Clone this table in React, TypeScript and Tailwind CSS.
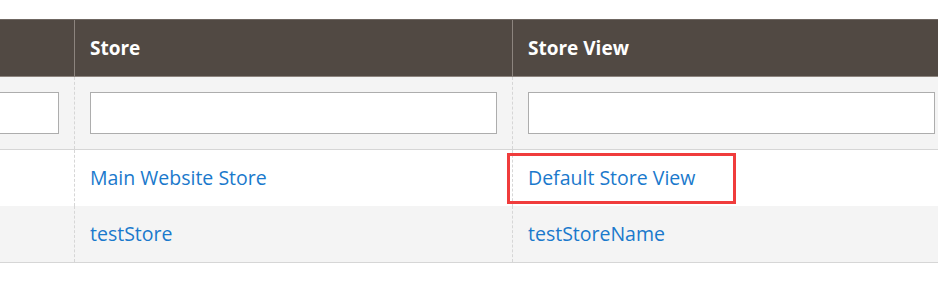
import React from "react";

const font = { fontFamily: '"Open Sans", "Noto Sans", sans-serif' };

export default function App() {
  return (
    <div className="w-[938px] h-[299px] overflow-hidden bg-white pt-[19px]" style={font}>
      <div className="w-[1100px]">
        {/* Header */}
        <div className="flex h-[58px] bg-[#514943] border-t border-t-[#6f6762] border-b border-b-[#8c847e]">
          <div className="w-[74px] shrink-0" />
          <div className="w-[438px] shrink-0 border-l border-l-[#8c847e] pl-[15px] flex items-center text-white font-bold text-[19px]">
            Store
          </div>
          <div className="w-[438px] shrink-0 border-l border-l-[#8c847e] pl-[15px] flex items-center text-white font-bold text-[19px]">
            Store View
          </div>
        </div>
        {/* Filter row */}
        <div className="flex bg-[#f4f4f4] border-b border-b-[#d6d6d6]">
          <div className="w-[74px] shrink-0 overflow-hidden py-[15px] pr-[15px] flex justify-end">
            <div className="w-[120px] shrink-0 h-[42px] bg-white border border-[#adadad]" />
          </div>
          <div className="w-[438px] shrink-0 border-l border-dashed border-l-[#d6d6d6] py-[15px] pl-[15px] pr-[15px]">
            <div className="h-[42px] bg-white border border-[#adadad]" />
          </div>
          <div className="w-[438px] shrink-0 border-l border-dashed border-l-[#d6d6d6] py-[15px] pl-[15px] pr-[15px]">
            <div className="h-[42px] bg-white border border-[#adadad]" />
          </div>
        </div>
        {/* Row 1 */}
        <div className="flex h-[56px] bg-white">
          <div className="w-[74px] shrink-0" />
          <div className="w-[438px] shrink-0 border-l border-dashed border-l-[#d6d6d6] pl-[15px] flex items-center text-[#1a79cc] text-[19.5px]">
            Main Website Store
          </div>
          <div className="relative w-[438px] shrink-0 border-l border-dashed border-l-[#d6d6d6] pl-[15px] flex items-center text-[#1a79cc] text-[19.5px]">
            Default Store View
            <div className="absolute left-[-6px] top-[3px] w-[229px] h-[51px] border-[3px] border-[#f03c3c]" />
          </div>
        </div>
        {/* Row 2 */}
        <div className="flex h-[57px] bg-[#f4f4f4] border-b border-b-[#d6d6d6]">
          <div className="w-[74px] shrink-0" />
          <div className="w-[438px] shrink-0 border-l border-dashed border-l-[#d6d6d6] pl-[15px] flex items-center text-[#1a79cc] text-[19.5px]">
            testStore
          </div>
          <div className="w-[438px] shrink-0 border-l border-dashed border-l-[#d6d6d6] pl-[15px] flex items-center text-[#1a79cc] text-[19.5px]">
            testStoreName
          </div>
        </div>
      </div>
    </div>
  );
}
